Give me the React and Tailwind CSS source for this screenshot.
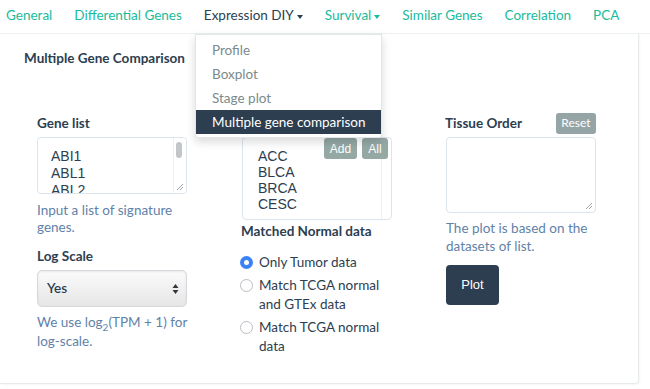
import { useState } from 'react'

const lato = { fontFamily: 'Lato, "Open Sans", sans-serif' }
const arial = { fontFamily: '"Liberation Sans", Arial, sans-serif' }

function Caret() {
  return <span className="ml-[3px] inline-block w-0 h-0 border-t-[4px] border-t-current border-x-[3.5px] border-x-transparent align-middle" />
}

function Grip() {
  return (
    <svg className="absolute right-[2px] bottom-[2px]" width="8" height="8" viewBox="0 0 8 8">
      <path d="M1 7 L7 1 M4 7 L7 4" stroke="#9aa3ab" strokeWidth="1" />
    </svg>
  )
}

function Radio({ checked, children }) {
  return (
    <label className="flex items-start gap-[6px] leading-[19px]">
      <span className={'mt-[3px] shrink-0 w-[13px] h-[13px] rounded-full flex items-center justify-center ' + (checked ? 'bg-[#3b82f6]' : 'border border-[#b9bec4] bg-white')}>
        {checked && <span className="w-[5px] h-[5px] rounded-full bg-white" />}
      </span>
      <span>{children}</span>
    </label>
  )
}

export default function App() {
  const [scale, setScale] = useState('Yes')
  const [normal, setNormal] = useState('tumor')

  const nav = ['General', 'Differential Genes', 'Expression DIY', 'Survival', 'Similar Genes', 'Correlation', 'PCA']

  return (
    <div className="w-[650px] h-[389px] bg-white text-[#2c3e50] relative overflow-hidden" style={lato}>
      <div className="h-[34px] border-b border-[#ecf0f1] flex items-start pt-[6px] pl-[6px] gap-[22px] text-[13.5px] leading-[18px]">
        {nav.map((n) => (
          <span key={n} className={n === 'Expression DIY' ? 'text-[#2c3e50]' : 'text-[#18bc9c]'}>
            {n}
            {(n === 'Expression DIY' || n === 'Survival') && <Caret />}
          </span>
        ))}
      </div>

      <div className="w-[639px] border-r border-b border-[#e6eaec] rounded-br-[4px] shadow-[1px_1px_2px_rgba(0,0,0,0.04)] pb-[27px]">
        <h4 className="pl-[24px] pt-[15px] text-[13.5px] font-bold leading-[18px]">Multiple Gene Comparison</h4>

        <div className="grid grid-cols-[204px_204px_204px] pl-[22px] mt-[47px] text-[13.5px]">
          <div className="px-[15px]">
            <div className="font-bold leading-[18px]">Gene list</div>
            <div className="relative mt-[5px] w-[150px] h-[57px] border border-[#dce4ec] rounded-[4px] overflow-hidden pl-[13px] pt-[10px] text-[14px] leading-[17px]" style={arial}>
              <div>ABI1</div>
              <div>ABL1</div>
              <div>ABL2</div>
              <div className="absolute right-0 top-0 bottom-0 w-[13px] border-l border-[#eef0f2] bg-white" />
              <div className="absolute right-[4px] top-[4px] w-[6px] h-[16px] rounded-full bg-[#c3c6c9]" />
              <Grip />
            </div>
            <p className="mt-[8px] leading-[17px] text-[#5f82a8]">Input a list of signature genes.</p>
            <div className="mt-[11px] font-bold leading-[18px]">Log Scale</div>
            <div className="relative mt-[5px] w-[150px] h-[37px] rounded-[5px] border border-[#d5d9dd] bg-gradient-to-b from-[#fbfbfb] to-[#e6e6e6] shadow-[inset_0_1px_2px_rgba(0,0,0,0.08)] flex items-center pl-[9px] font-semibold">
              <select value={scale} onChange={(e) => setScale(e.target.value)} className="absolute inset-0 opacity-0">
                <option>Yes</option>
                <option>No</option>
              </select>
              {scale}
              <svg className="absolute right-[7px] top-[12px]" width="7" height="12" viewBox="0 0 7 12">
                <path d="M3.5 1 L6.5 5 L0.5 5 Z M3.5 11 L6.5 7 L0.5 7 Z" fill="#33383d" />
              </svg>
            </div>
            <p className="mt-[6px] leading-[19px] text-[#5f82a8]">
              We use log<span className="inline-block text-[10px] leading-[10px] align-[-4px]">2</span>(TPM + 1) for log-scale.
            </p>
          </div>

          <div className="pl-[16px] pr-[15px]">
            <div className="h-[18px]" />
            <div className="relative mt-[5px] w-[150px] h-[83px] border border-[#dce4ec] rounded-[4px] pl-[15px] pt-[10px] text-[14px] leading-[16px]" style={arial}>
              <div>ACC</div>
              <div>BLCA</div>
              <div>BRCA</div>
              <div>CESC</div>
              <div className="absolute right-0 top-0 bottom-0 w-[10px] border-l border-[#eef0f2]" />
              <div className="absolute top-0 right-[3px] flex gap-[5px] text-[12px] text-white">
                <button className="h-[21px] w-[33px] rounded-[3px] bg-[#94a8a4]">Add</button>
                <button className="h-[21px] w-[26px] rounded-[3px] bg-[#94a8a4]">All</button>
              </div>
            </div>
            <div className="mt-[2px] -ml-[1px] font-bold leading-[18px]">Matched Normal data</div>
            <div className="mt-[13px] -ml-[2px] flex flex-col gap-[4px]">
              {[
                ['tumor', 'Only Tumor data'],
                ['gtex', 'Match TCGA normal and GTEx data'],
                ['tcga', 'Match TCGA normal data'],
              ].map(([k, t]) => (
                <div key={k} onClick={() => setNormal(k)} className="w-[150px]">
                  <Radio checked={normal === k}>{t}</Radio>
                </div>
              ))}
            </div>
          </div>

          <div className="pl-[16px] pr-[15px]">
            <div className="w-[150px] flex items-center justify-between h-[18px]">
              <span className="font-bold leading-[18px] -ml-[1px]">Tissue Order</span>
              <button className="h-[21px] w-[40px] rounded-[3px] bg-[#95a5a6] text-white text-[12px]">Reset</button>
            </div>
            <div className="relative mt-[5px] w-[150px] h-[76px] border border-[#dce4ec] rounded-[4px]">
              <Grip />
            </div>
            <p className="mt-[6px] leading-[18px] text-[#5f82a8]">The plot is based on the datasets of list.</p>
            <button className="mt-[10px] w-[53px] h-[40px] rounded-[4px] bg-[#2c3e50] text-white text-[13px] font-medium" style={arial}>Plot</button>
          </div>
        </div>
      </div>

      <div className="absolute left-[195px] top-[34px] w-[187px] bg-white border border-[#e3e6e8] rounded-b-[3px] shadow-[0_4px_10px_rgba(0,0,0,0.15)] py-[3px] text-[13.5px]">
        <div className="h-[24px] leading-[24px] pl-[16px] text-[#7b8a8b]">Profile</div>
        <div className="h-[24px] leading-[24px] pl-[16px] text-[#7b8a8b]">Boxplot</div>
        <div className="h-[24px] leading-[24px] pl-[16px] text-[#7b8a8b]">Stage plot</div>
        <div className="h-[24px] leading-[24px] pl-[16px] bg-[#2c3e50] text-white">Multiple gene comparison</div>
      </div>
    </div>
  )
}
